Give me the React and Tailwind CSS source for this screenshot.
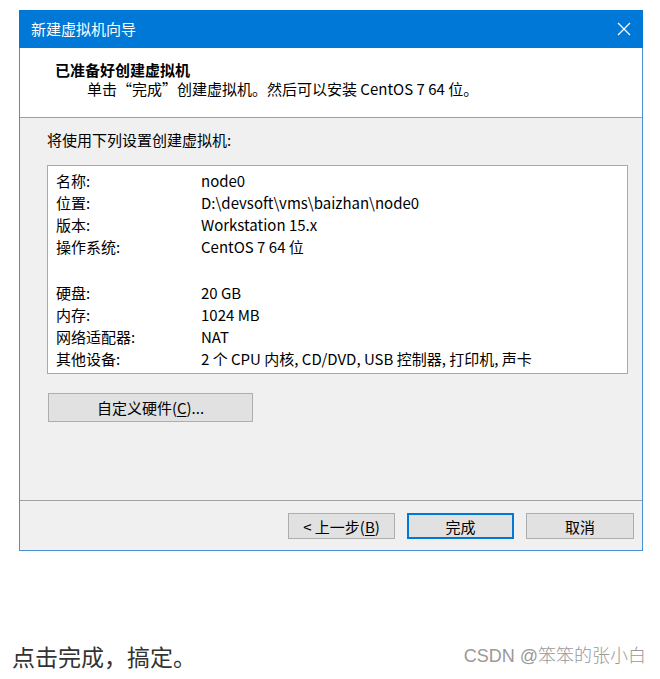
const font = { fontFamily: '"Noto Sans CJK SC", "Noto Sans", sans-serif' };

const rows = [
  ["名称:", "node0"],
  ["位置:", "D:\\devsoft\\vms\\baizhan\\node0"],
  ["版本:", "Workstation 15.x"],
  ["操作系统:", "CentOS 7 64 位"],
  null,
  ["硬盘:", "20 GB"],
  ["内存:", "1024 MB"],
  ["网络适配器:", "NAT"],
  ["其他设备:", "2 个 CPU 内核, CD/DVD, USB 控制器, 打印机, 声卡"],
];

function WinButton({ children, primary = false, className = "" }) {
  return (
    <button
      type="button"
      className={[
        "flex items-center justify-center bg-[#e1e1e1] text-[15px] leading-none text-black",
        primary ? "border-2 border-[#0078d7]" : "border border-[#adadad]",
        className,
      ].join(" ")}
    >
      {children}
    </button>
  );
}

export default function App() {
  return (
    <div className="h-[679px] w-[660px] overflow-hidden bg-white" style={font}>
      <div className="ml-[19px] mt-[10px] w-[624px] border border-t-0 border-[#4a90d6]">
        {/* title bar */}
        <div className="-mx-px flex h-[38px] items-center justify-between bg-[#0078d7] pl-[12px] pr-[11px]">
          <span className="text-[15px] text-white">新建虚拟机向导</span>
          <svg width="14" height="14" viewBox="0 0 14 14" className="mr-[1px]">
            <path d="M1 1 L13 13 M13 1 L1 13" stroke="white" strokeWidth="1.3" fill="none" />
          </svg>
        </div>

        {/* header */}
        <div className="h-[70px] border-b border-[#a0a0a0] bg-white pt-[12px]">
          <div className="pl-[35px] text-[15px] font-bold leading-[19px] text-black">已准备好创建虚拟机</div>
          <div className="pl-[67px] text-[15px] leading-[19px] text-black">
            单击“完成”创建虚拟机。然后可以安装 CentOS 7 64 位。
          </div>
        </div>

        {/* body */}
        <div className="h-[382px] bg-[#f0f0f0] pt-[12px]">
          <div className="pl-[27px] text-[15px] leading-[20px] text-black">将使用下列设置创建虚拟机:</div>
          <div className="ml-[27px] mt-[15px] h-[209px] w-[581px] border border-[#a9a9a9] bg-white pl-[8px] pt-[4px]">
            {rows.map((row, i) =>
              row ? (
                <div key={i} className="flex text-[15px] leading-[22px] text-black">
                  <span className="w-[145px] shrink-0">{row[0]}</span>
                  <span>{row[1]}</span>
                </div>
              ) : (
                <div key={i} className="h-[24px]" />
              )
            )}
          </div>
          <WinButton className="ml-[28px] mt-[19px] h-[29px] w-[205px]">
            自定义硬件(<span className="underline underline-offset-2">C</span>)...
          </WinButton>
        </div>

        {/* footer */}
        <div className="flex h-[50px] items-start justify-end gap-[12px] border-t border-[#a0a0a0] bg-[#f0f0f0] pr-[8px] pt-[12px]">
          <WinButton className="h-[26px] w-[107px]">
            &lt; 上一步(<span className="underline underline-offset-2">B</span>)
          </WinButton>
          <WinButton primary className="h-[26px] w-[107px]">完成</WinButton>
          <WinButton className="h-[26px] w-[108px]">取消</WinButton>
        </div>
      </div>

      <div className="mt-[88px] flex items-center justify-between pl-[12px] pr-[14px]">
        <span className="text-[23px] text-[#333]">点击完成，搞定。</span>
        <span
          className="text-[18px] font-light text-[#999]"
          style={{ fontFamily: '"Liberation Sans", "Noto Sans CJK SC", sans-serif' }}
        >
          CSDN @笨笨的张小白
        </span>
      </div>
    </div>
  );
}
